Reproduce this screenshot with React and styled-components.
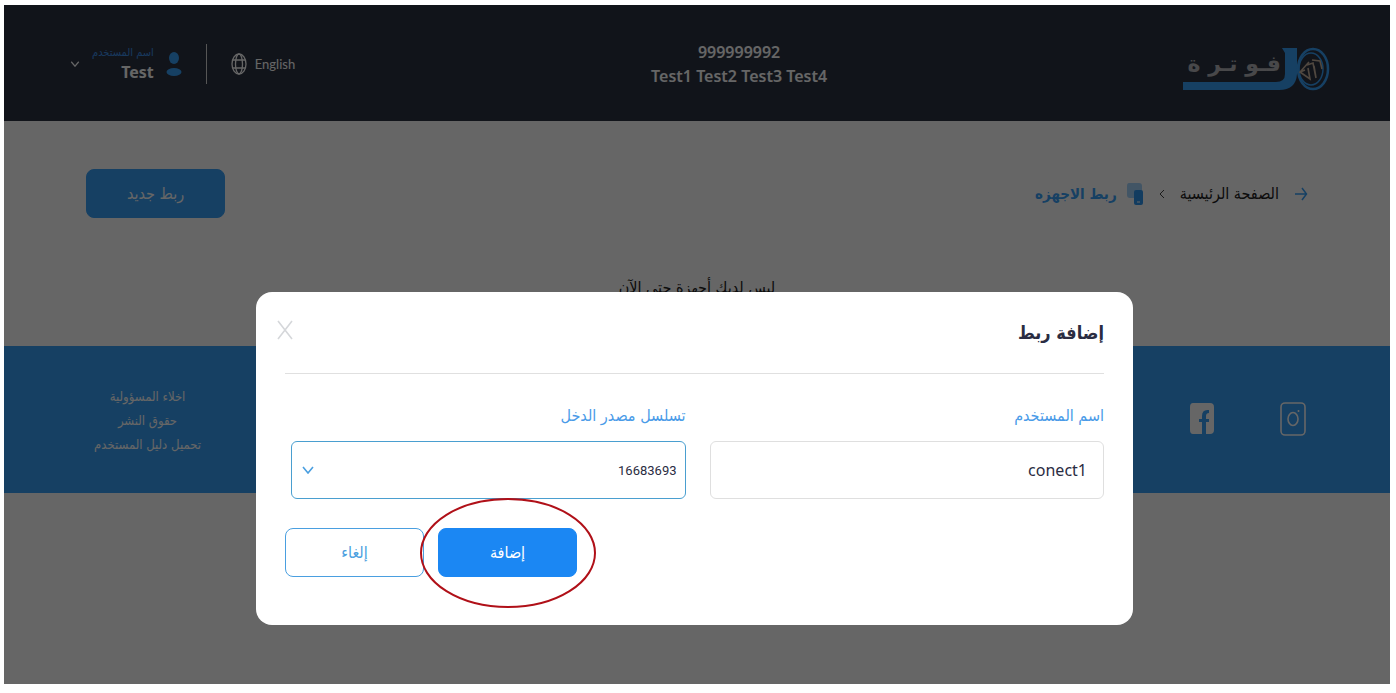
import { useState } from "react";
import styled, { createGlobalStyle } from "styled-components";

import React from "react";

function App() {
  const [userName, setUserName] = useState("conect1");
  const [source, setSource] = useState("16683693");

  return (
    <Frame dir="rtl" lang="ar">
      <GlobalStyle />
      <Header>
        <Logo />
        <Company dir="ltr">
          <div>999999992</div>
          <div>Test1 Test2 Test3 Test4</div>
        </Company>
        <HeaderTools>
          <Language type="button" lang="en">
            <GlobeIcon />
            English
          </Language>
          <Divider />
          <UserMenu type="button">
            <UserIcon />
            <UserText>
              <small>اسم المستخدم</small>
              <strong>Test</strong>
            </UserText>
            <Chevron width="10" height="6" />
          </UserMenu>
        </HeaderTools>
      </Header>

      <main>
        <TitleRow>
          <Breadcrumb aria-label="breadcrumb">
            <ArrowIcon />
            <a href="#home">الصفحة الرئيسية</a>
            <Separator />
            <DevicesIcon />
            <h1>ربط الاجهزه</h1>
          </Breadcrumb>
          <Button type="button" $variant="page">
            ربط جديد
          </Button>
        </TitleRow>
        <Empty>ليس لديك أجهزة حتى الآن</Empty>
      </main>

      <Footer>
        <Social>
          <a href="#instagram" aria-label="Instagram">
            <InstagramIcon />
          </a>
          <a href="#facebook" aria-label="Facebook">
            <FacebookIcon />
          </a>
        </Social>
        <FooterLinks>
          <a href="#disclaimer">اخلاء المسؤولية</a>
          <a href="#copyright">حقوق النشر</a>
          <a href="#guide">تحميل دليل المستخدم</a>
        </FooterLinks>
      </Footer>

      <Overlay>
        <Modal role="dialog" aria-labelledby="modal-title">
          <ModalHeader>
            <h2 id="modal-title">إضافة ربط</h2>
            <CloseButton type="button" aria-label="إغلاق">
              <CloseIcon />
            </CloseButton>
          </ModalHeader>
          <Fields>
            <Field>
              <label htmlFor="user-name">اسم المستخدم</label>
              <Input
                id="user-name"
                dir="ltr"
                value={userName}
                onChange={(e) => setUserName(e.target.value)}
              />
            </Field>
            <Field>
              <label htmlFor="income-source">تسلسل مصدر الدخل</label>
              <SelectBox>
                <Select
                  id="income-source"
                  value={source}
                  onChange={(e) => setSource(e.target.value)}
                >
                  <option value="16683693">16683693</option>
                </Select>
                <Chevron width="12" height="8" />
              </SelectBox>
            </Field>
          </Fields>
          <Actions>
            <Marked>
              <Button type="button" $variant="primary">
                إضافة
              </Button>
              <Ring viewBox="0 0 176 110" aria-hidden="true">
                <ellipse cx="88" cy="55" rx="87" ry="54" />
              </Ring>
            </Marked>
            <Button type="button" $variant="outline">
              إلغاء
            </Button>
          </Actions>
        </Modal>
      </Overlay>
    </Frame>
  );
}

const Logo = () => (
  <svg width="147" height="56" viewBox="0 -10 147 56" role="img" aria-label="فوترة">
    <path
      d="M0 44V36H93Q102 36 102 28V7L99 2H114V28Q113 44 96 44Z"
      fill="#37a0f8"
    />
    <LogoText x="98" y="25" direction="rtl">
      فـو تـر ة
    </LogoText>
    <ellipse cx="130" cy="23" rx="15" ry="20" fill="none" stroke="#37a0f8" strokeWidth="2.5" />
    <ellipse cx="128" cy="23" rx="12" ry="16" fill="none" stroke="#37a0f8" strokeWidth="1.5" />
    <path
      d="M126 16L117 26L127 33L125 22M124 19L130 17L133 32L131 20M129 14L137 15L139 23M117 26L122 24"
      fill="none"
      stroke="#c9b4a0"
      strokeWidth="1.6"
    />
  </svg>
);

const GlobeIcon = () => (
  <svg width="16" height="22" viewBox="0 0 16 22" fill="none" stroke="#fff" strokeWidth="1.3">
    <ellipse cx="8" cy="11" rx="7" ry="10" />
    <ellipse cx="8" cy="11" rx="3.5" ry="10" />
    <path d="M2 7H14M2 15H14" />
  </svg>
);

const UserIcon = () => (
  <svg width="16" height="26" viewBox="0 0 16 26" fill="#37a0f8">
    <ellipse cx="8" cy="7" rx="5" ry="6" />
    <ellipse cx="8" cy="21" rx="7.5" ry="4" />
  </svg>
);

const Chevron = (props) => (
  <svg viewBox="0 0 12 8" fill="none" stroke="currentColor" strokeWidth="1.6" {...props}>
    <path d="M1 1L6 7L11 1" />
  </svg>
);

const ArrowIcon = () => (
  <svg width="14" height="14" viewBox="0 0 14 14" fill="none" stroke="#37a0f8" strokeWidth="1.5">
    <path d="M1 7H12M8 1L12.500 7L8 13" />
  </svg>
);

const Separator = () => (
  <svg width="6" height="10" viewBox="0 0 6 10" fill="none" stroke="#444" strokeWidth="1">
    <path d="M5 1L1 5L5 9" />
  </svg>
);

const DevicesIcon = () => (
  <svg width="18" height="24" viewBox="0 0 18 24">
    <path d="M3 1H13Q16 1 16 4V16H4Q1 16 1 13V4Q1 1 3 1Z" fill="#37a0f8" opacity=".45" />
    <rect x="8" y="8" width="9" height="15" rx="2" fill="#2f97f0" />
    <path d="M11 20H14" stroke="#fff" />
  </svg>
);

const InstagramIcon = () => (
  <svg width="26" height="34" viewBox="0 0 26 34" fill="none" stroke="#fff" strokeWidth="1.6">
    <rect x="1" y="1" width="24" height="32" rx="4" />
    <ellipse cx="13" cy="17" rx="5" ry="6.500" />
    <path d="M18.500 8V10" />
  </svg>
);

const FacebookIcon = () => (
  <svg width="25" height="34" viewBox="0 0 25 34">
    <path
      fill="#fff"
      d="M4 1H21Q25 1 25 5V28Q25 32 21 32H17V20H20V17H17V14Q17 11 20 11V8Q13 7 13 14V17H10V20H13V32H4Q1 32 1 28V5Q1 1 4 1Z"
    />
  </svg>
);

const CloseIcon = () => (
  <svg width="16" height="20" viewBox="0 0 16 20" fill="none" stroke="#d5d7da" strokeWidth="1.6">
    <path d="M1 1L15 19M15 1L1 19" />
  </svg>
);

const GlobalStyle = createGlobalStyle`
  * {
    box-sizing: border-box;
  }
  body {
    margin: 0;
    background: #fff;
    font-family: "DejaVu Sans Condensed", "DejaVu Sans", sans-serif;
  }
  button, input, select {
    font-family: inherit;
  }
  a {
    color: inherit;
    text-decoration: none;
  }
  h1, h2, p {
    margin: 0;
  }
  svg {
    flex-shrink: 0;
  }
`;

const Frame = styled.div`
  position: relative;
  min-height: calc(100vh - 14px);
  margin: 5px 6px 9px 4px;
  color: #222;
`;

const Header = styled.header`
  display: flex;
  align-items: center;
  justify-content: space-between;
  height: 116px;
  padding: 2px 60px 0 66px;
  background: #2c3343;
  color: #fff;
`;

const LogoText = styled.text`
  font-family: "DejaVu Sans", sans-serif;
  font-size: 22px;
  font-weight: bold;
  fill: #b5b5b8;
  stroke: #2c3343;
  stroke-width: 3px;
  paint-order: stroke;
`;

const Company = styled.div`
  text-align: center;
  font-family: "Noto Sans", sans-serif;
  font-size: 16px;
  font-weight: 600;
  line-height: 24px;
`;

const HeaderTools = styled.div`
  display: flex;
  align-items: center;
  gap: 24px;
`;

const Language = styled.button`
  display: flex;
  align-items: center;
  gap: 8px;
  flex-direction: row-reverse;
  padding: 0;
  border: 0;
  background: none;
  color: #fff;
  font-family: Lato, sans-serif;
  font-size: 13px;
`;

const Divider = styled.span`
  width: 1px;
  height: 40px;
  background: #d8d8d8;
`;

const UserMenu = styled.button`
  display: flex;
  align-items: center;
  gap: 12px;
  padding: 0;
  border: 0;
  background: none;
  color: #fff;
`;

const UserText = styled.span`
  display: flex;
  flex-direction: column;
  align-items: flex-start;

  small {
    color: #3d8fe8;
    font-size: 11px;
    line-height: 16px;
  }
  strong {
    font-family: "Noto Sans", sans-serif;
    font-size: 16px;
    line-height: 22px;
  }
`;

const TitleRow = styled.div`
  display: flex;
  align-items: center;
  justify-content: space-between;
  padding: 48px 82px;
`;

const Breadcrumb = styled.nav`
  display: flex;
  align-items: center;
  gap: 15px;
  font-size: 16px;

  h1 {
    color: #37a0f8;
    font-size: 15px;
    margin-right: -6px;
  }
`;

const Button = styled.button`
  width: 139px;
  height: 49px;
  padding: 0;
  border: 1px solid
    ${(p) => ({ page: "#37a0f8", primary: "#1b87f3", outline: "#4a9fe0" })[p.$variant]};
  border-radius: 8px;
  background: ${(p) =>
    ({ page: "#37a0f8", primary: "#1b87f3", outline: "#fff" })[p.$variant]};
  color: ${(p) => (p.$variant === "outline" ? "#4a9fe0" : "#fff")};
  font-size: 16px;
`;

const Empty = styled.p`
  padding: 8px 0 44px;
  text-align: center;
  font-size: 16px;
  line-height: 28px;
`;

const Footer = styled.footer`
  display: flex;
  align-items: center;
  justify-content: space-between;
  height: 147px;
  padding: 2px 84px 0 90px;
  background: #37a0f8;
  color: #fff;
`;

const Social = styled.div`
  display: flex;
  gap: 66px;
`;

const FooterLinks = styled.nav`
  display: flex;
  flex-direction: column;
  align-items: center;
  font-size: 13px;
  line-height: 24px;
`;

const Overlay = styled.div`
  position: absolute;
  inset: 0;
  padding: 287px 5px 0 0;
  background: rgba(0, 0, 0, 0.6);
`;

const Modal = styled.section`
  width: 90%;
  max-width: 877px;
  margin: 0 auto;
  padding: 0 29px 48px;
  border-radius: 16px;
  background: #fff;
`;

const ModalHeader = styled.div`
  display: flex;
  align-items: center;
  justify-content: space-between;
  height: 82px;
  border-bottom: 1px solid #e0e0e0;

  h2 {
    color: #2a2c42;
    font-size: 18px;
  }
`;

const CloseButton = styled.button`
  display: flex;
  margin: 0 0 6px -8px;
  padding: 0;
  border: 0;
  background: none;
`;

const Fields = styled.div`
  display: grid;
  grid-template-columns: 1fr 1fr;
  gap: 24px;
  padding: 28px 0 29px 6px;
`;

const Field = styled.div`
  display: flex;
  flex-direction: column;

  label {
    color: #4a9be8;
    font-size: 16px;
    line-height: 28px;
    margin-bottom: 11px;
  }
`;

const Input = styled.input`
  width: 100%;
  height: 58px;
  padding: 0 16px;
  border: 1px solid #dfdfdf;
  border-radius: 6px;
  color: #2a2c42;
  font-family: "Noto Sans", sans-serif;
  font-size: 16px;
  text-align: right;
`;

const SelectBox = styled.div`
  position: relative;
  color: #4a9fe0;

  svg {
    position: absolute;
    left: 11px;
    top: 25px;
    pointer-events: none;
  }
`;

const Select = styled.select`
  width: 100%;
  height: 58px;
  padding: 0 8px;
  appearance: none;
  border: 1px solid #4a9fd0;
  border-radius: 6px;
  background: #fff;
  color: #2a2c42;
  font-family: Roboto, sans-serif;
  font-size: 13px;
`;

const Actions = styled.div`
  display: flex;
  justify-content: flex-end;
  gap: 14px;
`;

const Marked = styled.div`
  position: relative;
`;

// red ring around the confirm button
const Ring = styled.svg`
  position: absolute;
  top: -30px;
  left: -18px;
  width: 176px;
  height: 110px;
  pointer-events: none;
  fill: none;
  stroke: #b01018;
  stroke-width: 2px;
`;

export default App;
